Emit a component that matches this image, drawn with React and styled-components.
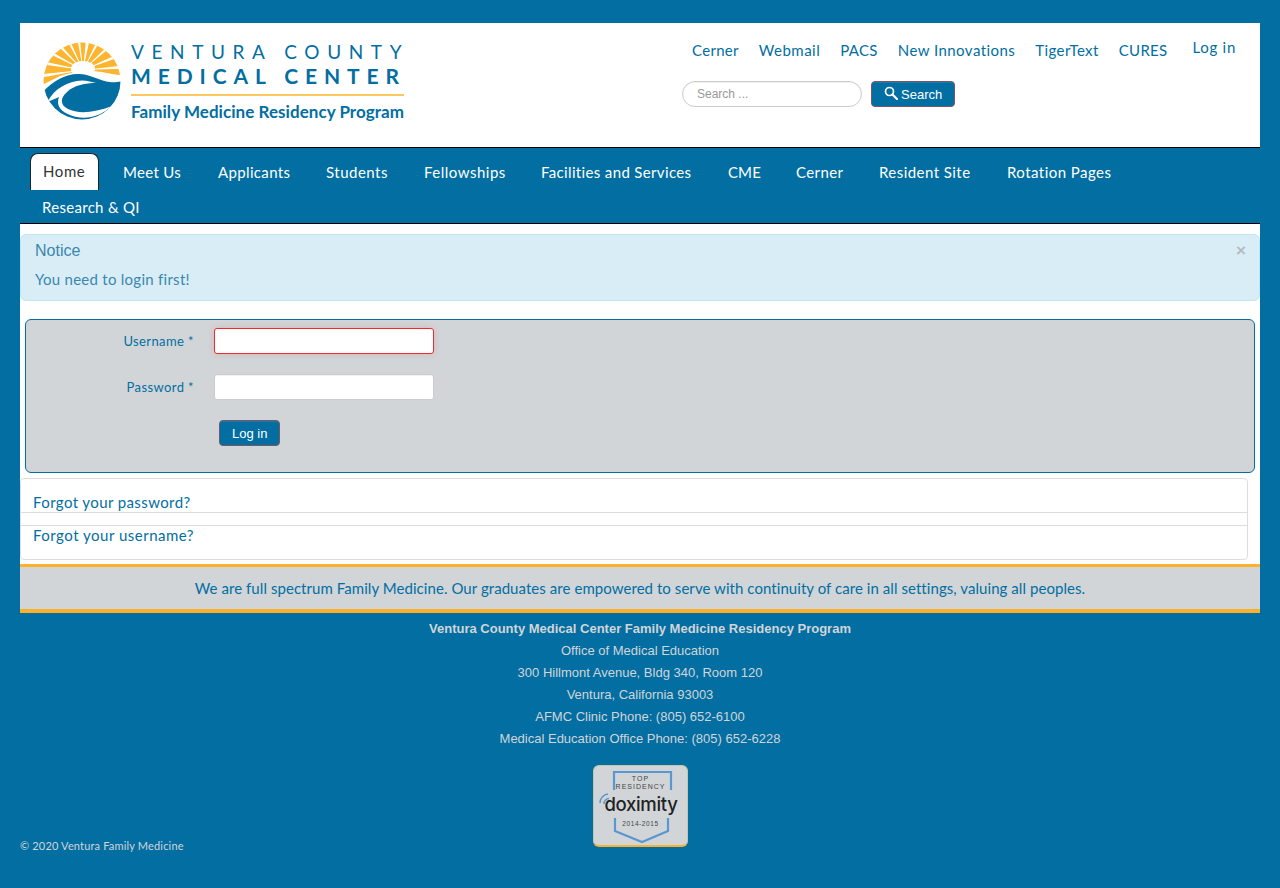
import React from "react";
import styled, { createGlobalStyle } from "styled-components";

const BLUE = "#026ea2";
const GREY = "#d1d5d8";
const ORANGE = "#fdb12b";
const BODY_FONT = '"Lato", "Liberation Sans", sans-serif';
const ARIAL = '"Liberation Sans", Arial, sans-serif';

const Global = createGlobalStyle`
  html, body { margin: 0; padding: 0; background: ${BLUE}; }
  * { box-sizing: border-box; }
  body { font-family: ${BODY_FONT}; }
`;

const Page = styled.div`
  padding: 23px 20px 0;
  min-height: 888px;
`;

const Header = styled.header`
  height: 125px;
  background: #fff;
  border-bottom: 1px solid #000;
  display: flex;
  justify-content: space-between;
  padding: 17px 0 0 23px;
`;

const Logo = styled.div`
  display: flex;
  gap: 1px;
  align-items: flex-start;
`;

const LogoText = styled.div`
  display: flex;
  flex-direction: column;
  width: 273px;
  color: ${BLUE};
  white-space: nowrap;
  padding-top: 2px;
`;

const LogoLine1 = styled.div`
  font: 400 19px/20px "Lato", sans-serif;
  letter-spacing: 7.6px;
`;

const LogoLine2 = styled.div`
  font: 700 21px/24px "Lato", sans-serif;
  letter-spacing: 6.9px;
  margin-top: 2px;
`;

const LogoRule = styled.div`
  height: 2px;
  background: #fcc75b;
  margin-top: 6px;
`;

const LogoLine3 = styled.div`
  font: 700 17px/20px "Lato", sans-serif;
  letter-spacing: 0.05px;
  margin-top: 6px;
`;

const HeaderRight = styled.div`
  width: 578px;
  display: flex;
  flex-direction: column;
`;

const TopRow = styled.div`
  display: flex;
  align-items: flex-start;
  padding-left: 10px;
`;

const TopLinks = styled.nav`
  display: flex;
  gap: 20px;
`;

const TopLink = styled.a`
  color: ${BLUE};
  font-size: 15px;
  line-height: 20px;
  letter-spacing: ${(p) => p.$ls || "0.3px"};
  white-space: nowrap;
`;

const LoginLink = styled(TopLink)`
  margin-left: 25px;
  margin-top: -3px;
`;

const SearchForm = styled.form`
  display: flex;
  align-items: center;
  gap: 9px;
  margin-top: 21px;
`;

const SearchInput = styled.input`
  width: 180px;
  height: 26px;
  border: 1px solid #ccc;
  border-radius: 13px;
  padding: 0 14px;
  font: 12px ${ARIAL};
  background: #fff;
  box-shadow: inset 0 1px 1px rgba(0,0,0,.06);
  &::placeholder { color: #999; opacity: 1; }
`;

const Btn = styled.button`
  background: ${BLUE};
  color: #fff;
  border: 1px solid #7d5560;
  border-radius: 4px;
  font: 13px ${ARIAL};
  height: 26px;
  padding: 0 12px;
  display: inline-flex;
  align-items: center;
  gap: 3px;
  box-shadow: inset 0 1px 0 rgba(255,255,255,.1);
`;

const NavBar = styled.nav`
  background: ${BLUE};
  border-bottom: 1px solid #000;
  height: 76px;
  padding: 5px 10px 0;
  display: flex;
  flex-wrap: wrap;
  align-content: flex-start;
`;

const NavItem = styled.a`
  display: block;
  flex: none;
  width: ${(p) => p.$w}px;
  height: 37px;
  padding: 0 0 0 12px;
  line-height: ${(p) => (p.$active ? 34 : 38)}px;
  font-size: 15px;
  white-space: nowrap;
  letter-spacing: ${(p) => p.$ls || "0.3px"};
  color: ${(p) => (p.$active ? "#333" : "#fff")};
  background: ${(p) => (p.$active ? "#fff" : "transparent")};
  border: ${(p) => (p.$active ? "1px solid #222" : "0")};
  border-bottom: 0;
  border-radius: ${(p) => (p.$active ? "8px 8px 0 0" : "0")};
  margin-right: ${(p) => p.$gap || 0}px;
`;

const NavItem2 = styled(NavItem)`
  height: 33px;
  line-height: 34px;
`;

const Content = styled.main`
  background: #fff;
  padding-top: 10px;
  height: 340px;
`;

const Alert = styled.div`
  height: 67px;
  background: #d9edf7;
  border: 1px solid #bce8f1;
  border-radius: 6px;
  padding: 6px 14px;
  color: #3a87ad;
  position: relative;
`;

const AlertHead = styled.div`
  font: 16px/20px ${ARIAL};
`;

const AlertBody = styled.div`
  font-size: 15px;
  line-height: 20px;
  margin-top: 8px;
  letter-spacing: 0.27px;
`;

const Close = styled.span`
  position: absolute;
  right: 13px;
  top: 6px;
  font: bold 17px/20px ${ARIAL};
  color: #b4bcc0;
`;

const LoginPanel = styled.form`
  margin: 18px 5px 0;
  height: 154px;
  background: ${GREY};
  border: 1px solid ${BLUE};
  border-radius: 6px;
  padding: 8px 0 0;
`;

const FormRow = styled.div`
  display: flex;
  align-items: center;
  gap: 20px;
  height: 26px;
  margin-bottom: 20px;
`;

const FieldLabel = styled.label`
  width: 168px;
  text-align: right;
  color: ${BLUE};
  font-size: 13px;
  letter-spacing: 0.4px;
`;

const Field = styled.input`
  width: 220px;
  height: 26px;
  border-radius: 3px;
  background: #fff;
  border: 1px solid ${(p) => (p.$error ? "#ee2a2a" : "#ccc")};
  box-shadow: ${(p) => (p.$error ? "0 0 6px rgba(238,80,80,.25)" : "inset 0 1px 1px rgba(0,0,0,.06)")};
`;

const SubmitRow = styled.div`
  padding-left: 193px;
`;

const LinkList = styled.ul`
  list-style: none;
  margin: 5px 0 0;
  padding: 0;
  width: 1228px;
  height: 82px;
  border: 1px solid #ddd;
  border-radius: 4px;
`;

const LinkItem = styled.li`
  height: 34px;
  padding-left: 12px;
  font-size: 15px;
  line-height: ${(p) => (p.$first ? 47 : 19)}px;
  letter-spacing: ${(p) => (p.$first ? "0.4px" : "0.5px")};
  color: ${BLUE};
  ${(p) => (p.$first ? "border-bottom: 1px solid #ddd;" : "border-top: 1px solid #ddd; margin-top: 12px;")}
`;

const Mission = styled.div`
  height: 49px;
  background: ${GREY};
  border-top: 3px solid ${ORANGE};
  border-bottom: 4px solid ${ORANGE};
  color: ${BLUE};
  font-size: 15px;
  letter-spacing: 0.06px;
  line-height: 42px;
  text-align: center;
`;

const Address = styled.address`
  font: 13px/22px ${ARIAL};
  font-style: normal;
  color: ${GREY};
  text-align: center;
  margin-top: 5px;
`;

const AddressLine = styled.div`
  font-weight: ${(p) => (p.$bold ? 700 : 400)};
`;

const BottomRow = styled.footer`
  display: grid;
  grid-template-columns: 1fr auto 1fr;
  align-items: end;
  margin-top: 15px;
`;

const Copyright = styled.div`
  font-size: 11px;
  line-height: 14px;
  color: ${GREY};
  letter-spacing: 0.17px;
  margin-bottom: -6px;
`;

const Badge = styled.div`
  position: relative;
  width: 95px;
  height: 82px;
  margin-left: 1px;
  background: ${GREY};
  border-radius: 6px;
  border: 1px solid #c8c4a8;
  border-bottom: 2px solid ${ORANGE};
  color: #333;
  text-align: center;
  overflow: hidden;
`;

const BadgeArt = styled.svg`
  display: block;
  position: absolute;
  left: -1px;
  top: -1px;
`;

const BadgeTop = styled.div`
  position: relative;
  font: 400 7px/8px ${ARIAL};
  letter-spacing: 1px;
  padding-top: 9px;
  color: #444;
`;

const BadgeWord = styled.div`
  position: relative;
  font: 500 18.5px/20px "Inter", ${ARIAL};
  letter-spacing: -0.3px;
  color: #222;
  margin-top: 3px;
  padding-left: 1px;
`;

const BadgeYears = styled.div`
  position: relative;
  font: 6.5px/8px ${ARIAL};
  letter-spacing: 0.6px;
  margin-top: 6px;
  color: #444;
`;

function SunMark() {
  const rays = [-82, -62, -42, -22, -4, 10, 172, 190, 208, 226, 244, 262, 280];
  return (
    <svg width="90" height="90" viewBox="0 0 90 90" style={{ margin: "-5px 0 0 -3px", flex: "none" }}>
      <defs>
        <clipPath id="disc">
          <circle cx="42" cy="46" r="38.5" />
        </clipPath>
      </defs>
      <g clipPath="url(#disc)">
        <rect width="90" height="90" fill="#fff" />
        <path d="M0 0H90V40L80 41L62 37L42 35L20 41L0 51Z" fill="#fdb530" />
        {rays.map((a) => {
          const r = (a * Math.PI) / 180;
          const d = 0.04;
          const L = 50;
          const x1 = 43 + L * Math.cos(r - d);
          const y1 = 35 + L * Math.sin(r - d);
          const x2 = 43 + L * Math.cos(r + d);
          const y2 = 35 + L * Math.sin(r + d);
          return <polygon key={a} points={`43,35 ${x1},${y1} ${x2},${y2}`} fill="#fff" />;
        })}
        <ellipse cx="43" cy="34" rx="12" ry="8" fill="#fff" />
        <path d="M0 60 C12 46 26 38 40 39 C52 40 60 46 70 47 C74 47.5 78 47 84 46 V90 H0Z" fill={BLUE} />
        <path d="M8 66 C14 54 28 46 42 45.5 C48 45.5 52 47 56 48 C46 48 34 50 27 57 C20 63 20 70 28 74 C38 79 54 78 72 71 C60 82 44 86 30 80 C20 76 16 70 19 62 C14 64 11 66 8 66Z" fill="#fff" />
      </g>
    </svg>
  );
}

function SearchGlyph() {
  return (
    <svg width="14" height="14" viewBox="0 0 14 14" fill="none" stroke="#fff" strokeWidth="1.7" style={{ marginTop: "-3px" }}>
      <circle cx="5.5" cy="5.5" r="4" />
      <path d="M8.5 8.5L13 13" strokeWidth="2.2" strokeLinecap="round" />
    </svg>
  );
}

function BadgeShield() {
  return (
    <BadgeArt width="95" height="80" viewBox="0 0 95 80" fill="none" stroke="#5b97cf" strokeWidth="2.2">
      <path d="M21 25V7H78V25" />
      <path d="M22 53V66L49 77L75 66V53" />
      <path d="M7 38A9 9 0 0 1 15 29" strokeWidth="1.5" />
      <path d="M11 39A5 5 0 0 1 16 33.5" strokeWidth="1.5" />
    </BadgeArt>
  );
}

const topLinks = [
  ["Cerner", "0.3px"],
  ["Webmail", "0.5px"],
  ["PACS", "0.3px"],
  ["New Innovations", "0.45px"],
  ["TigerText", "0.4px"],
  ["CURES", "0.3px"],
];

const navItems = [
  ["Home", 69, 12, "0.6px", true],
  ["Meet Us", 83, 12, "0.3px"],
  ["Applicants", 96, 12, "0.35px"],
  ["Students", 86, 12, "0.5px"],
  ["Fellowships", 105, 12, "0.5px"],
  ["Facilities and Services", 175, 12, "0.35px"],
  ["CME", 56, 12, "0.1px"],
  ["Cerner", 71, 12, "0.4px"],
  ["Resident Site", 116, 12, "0.45px"],
  ["Rotation Pages", 128, 0, "0.45px"],
];

export default function App() {
  return (
    <Page>
      <Global />
      <Header>
        <Logo>
          <SunMark />
          <LogoText>
            <LogoLine1>VENTURA COUNTY</LogoLine1>
            <LogoLine2>MEDICAL CENTER</LogoLine2>
            <LogoRule />
            <LogoLine3>Family Medicine Residency Program</LogoLine3>
          </LogoText>
        </Logo>
        <HeaderRight>
          <TopRow>
            <TopLinks>
              {topLinks.map(([t, ls]) => (
                <TopLink key={t} $ls={ls}>{t}</TopLink>
              ))}
            </TopLinks>
            <LoginLink $ls="0.7px">Log in</LoginLink>
          </TopRow>
          <SearchForm>
            <SearchInput placeholder="Search ..." />
            <Btn type="button"><SearchGlyph />Search</Btn>
          </SearchForm>
        </HeaderRight>
      </Header>
      <NavBar>
        {navItems.map(([t, w, g, ls, active]) => (
          <NavItem key={t} $w={w} $gap={g} $ls={ls} $active={active}>{t}</NavItem>
        ))}
        <NavItem2 $w={140}>Research &amp; QI</NavItem2>
      </NavBar>
      <Content>
        <Alert>
          <AlertHead>Notice</AlertHead>
          <AlertBody>You need to login first!</AlertBody>
          <Close>×</Close>
        </Alert>
        <LoginPanel>
          <FormRow>
            <FieldLabel>Username *</FieldLabel>
            <Field $error />
          </FormRow>
          <FormRow>
            <FieldLabel>Password *</FieldLabel>
            <Field />
          </FormRow>
          <SubmitRow>
            <Btn type="button">Log in</Btn>
          </SubmitRow>
        </LoginPanel>
        <LinkList>
          <LinkItem $first>Forgot your password?</LinkItem>
          <LinkItem>Forgot your username?</LinkItem>
        </LinkList>
      </Content>
      <Mission>We are full spectrum Family Medicine. Our graduates are empowered to serve with continuity of care in all settings, valuing all peoples.</Mission>
      <Address>
        <AddressLine $bold>Ventura County Medical Center Family Medicine Residency Program</AddressLine>
        <AddressLine>Office of Medical Education</AddressLine>
        <AddressLine>300 Hillmont Avenue, Bldg 340, Room 120</AddressLine>
        <AddressLine>Ventura, California 93003</AddressLine>
        <AddressLine>AFMC Clinic Phone: (805) 652-6100</AddressLine>
        <AddressLine>Medical Education Office Phone: (805) 652-6228</AddressLine>
      </Address>
      <BottomRow>
        <Copyright>© 2020 Ventura Family Medicine</Copyright>
        <Badge>
          <BadgeShield />
          <BadgeTop>TOP<br />RESIDENCY</BadgeTop>
          <BadgeWord>doximity</BadgeWord>
          <BadgeYears>2014-2015</BadgeYears>
        </Badge>
        <div />
      </BottomRow>
    </Page>
  );
}
